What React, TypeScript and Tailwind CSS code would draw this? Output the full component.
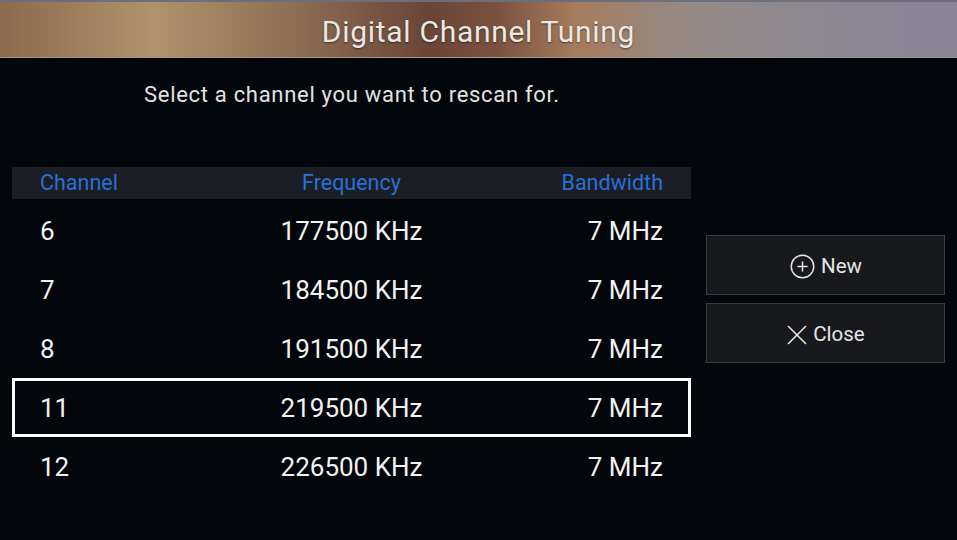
import { CirclePlus } from 'lucide-react'

type Row = {
  channel: string
  frequency: string
  bandwidth: string
}

const rows: Row[] = [
  { channel: '6', frequency: '177500 KHz', bandwidth: '7 MHz' },
  { channel: '7', frequency: '184500 KHz', bandwidth: '7 MHz' },
  { channel: '8', frequency: '191500 KHz', bandwidth: '7 MHz' },
  { channel: '11', frequency: '219500 KHz', bandwidth: '7 MHz' },
  { channel: '12', frequency: '226500 KHz', bandwidth: '7 MHz' },
]

const SELECTED = '11'

function ChannelTable() {
  return (
    <div className="w-[679px]">
      <div className="grid h-[32px] grid-cols-[1fr_1fr_1fr] items-center bg-[#1b1f25] px-[28px] text-[21.5px] text-[#2a6fd6]">
        <span>Channel</span>
        <span className="text-center">Frequency</span>
        <span className="text-right">Bandwidth</span>
      </div>

      <div className="mt-[2px] flex flex-col">
        {rows.map((r) => (
          <div
            key={r.channel}
            className={`grid h-[59px] grid-cols-[1fr_1fr_1fr] items-center pt-[2px] text-[26px] text-[#f2f2f2] ${
              r.channel === SELECTED ? 'border-[3px] border-white px-[25px]' : 'px-[28px]'
            }`}
          >
            <span>{r.channel}</span>
            <span className="text-center">{r.frequency}</span>
            <span className="text-right">{r.bandwidth}</span>
          </div>
        ))}
      </div>
    </div>
  )
}

function CloseIcon() {
  return (
    <svg width="22" height="22" viewBox="0 0 22 22" fill="none" stroke="currentColor" strokeWidth="1.6">
      <line x1="2" y1="2" x2="20" y2="20" />
      <line x1="20" y1="2" x2="2" y2="20" />
    </svg>
  )
}

function SideButton({ icon, label }: { icon: React.ReactNode; label: string }) {
  return (
    <button className="flex h-[60px] w-[239px] items-center justify-center gap-[5px] border border-[#3a3e44] bg-[#17191d] pt-[3px] text-[20.5px] text-[#e6e6e6]">
      {icon}
      <span>{label}</span>
    </button>
  )
}

export default function App() {
  return (
    <div
      className="relative h-[540px] w-[957px] overflow-hidden bg-[#03070b] text-white"
      style={{ fontFamily: 'Roboto, "Noto Sans", sans-serif' }}
    >
      <header className="flex h-[58px] items-center justify-center border-t-2 border-b border-t-[#6b6f7c] border-b-[#a09a8c] bg-[linear-gradient(90deg,#8c6a4f_0%,#b0926b_16%,#8b6a52_32%,#6a4537_45%,#7a5240_52%,#a57b5c_60%,#958a86_72%,#8c8790_85%,#8a8296_100%)]">
        <h1 className="pt-[3px] text-[30px] tracking-[0.7px] text-[#ece8e4] [text-shadow:0_1px_2px_rgba(0,0,0,0.5)]">
          Digital Channel Tuning
        </h1>
      </header>

      <p className="mt-[20px] pl-[144px] text-[22px] tracking-[0.7px] text-[#e2e2e2]">
        Select a channel you want to rescan for.
      </p>

      <div className="mt-[56px] flex items-start pl-[12px]">
        <ChannelTable />

        <div className="ml-[15px] mt-[68px] flex flex-col gap-[8px]">
          <SideButton icon={<CirclePlus size={27} strokeWidth={1.3} />} label="New" />
          <SideButton icon={<CloseIcon />} label="Close" />
        </div>
      </div>
    </div>
  )
}
